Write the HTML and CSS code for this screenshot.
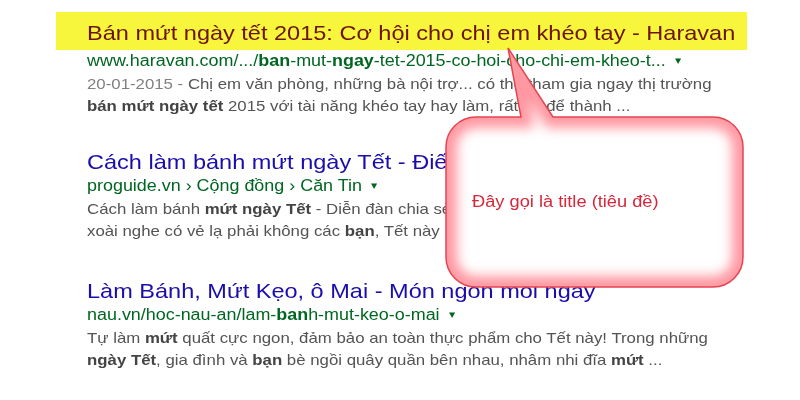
FILE: index.html
```html
<!DOCTYPE html>
<html lang="vi">
<head>
    <meta charset="UTF-8">
    <meta name="viewport" content="width=device-width, initial-scale=1.0">
    <title>Bán mứt ngày tết</title>
    <link rel="stylesheet" href="styles.css">
</head>
<body>
    <div class="results">
        <div class="result">
            <h3 class="title highlight">Bán mứt ngày tết 2015: Cơ hội cho chị em khéo tay - Haravan</h3>
            <div class="url">www.haravan.com/.../<b>ban</b>-mut-<b>ngay</b>-tet-2015-co-hoi-cho-chi-em-kheo-t... <span class="caret">▾</span></div>
            <p class="snippet"><span class="date">20-01-2015 - </span>Chị em văn phòng, những bà nội trợ... có thể tham gia ngay thị trường<br><b>bán mứt ngày tết</b> 2015 với tài năng khéo tay hay làm, rất dễ để thành ...</p>
        </div>
        <div class="result">
            <h3 class="title">Cách làm bánh mứt ngày Tết - Điếm tin</h3>
            <div class="url">proguide.vn › Cộng đồng › Căn Tin <span class="caret">▾</span></div>
            <p class="snippet">Cách làm bánh <b>mứt ngày Tết</b> - Diễn đàn chia sẻ<br>xoài nghe có vẻ lạ phải không các <b>bạn</b>, Tết này</p>
        </div>
        <div class="result">
            <h3 class="title">Làm Bánh, Mứt Kẹo, ô Mai - Món ngon mỗi ngày</h3>
            <div class="url">nau.vn/hoc-nau-an/lam-<b>ban</b>h-mut-keo-o-mai <span class="caret">▾</span></div>
            <p class="snippet">Tự làm <b>mứt</b> quất cực ngon, đảm bảo an toàn thực phẩm cho Tết này! Trong những<br><b>ngày Tết</b>, gia đình và <b>bạn</b> bè ngồi quây quần bên nhau, nhâm nhi đĩa <b>mứt</b> ...</p>
        </div>
    </div>

    <div class="callout">
        <svg class="bubble" width="310" height="254" viewBox="0 0 310 254">
            <defs>
                <clipPath id="bubbleClip">
                    <path id="bubbleShape" d="M36 77 L81 77 L68 8 L113 77 L273 77 A30 30 0 0 1 303 107 L303 217 A30 30 0 0 1 273 247 L36 247 A30 30 0 0 1 6 217 L6 107 A30 30 0 0 1 36 77 Z"/>
                </clipPath>
                <filter id="glow" x="-20%" y="-20%" width="140%" height="140%">
                    <feGaussianBlur stdDeviation="6"/>
                </filter>
            </defs>
            <use href="#bubbleShape" fill="#fff"/>
            <g clip-path="url(#bubbleClip)">
                <use href="#bubbleShape" fill="none" stroke="#ff8590" stroke-opacity="0.85" stroke-width="22" filter="url(#glow)"/>
            </g>
            <use href="#bubbleShape" fill="none" stroke="#e5444f" stroke-width="1.5"/>
        </svg>
        <p class="callout-text">Đây gọi là title (tiêu đề)</p>
    </div>
</body>
</html>
```

FILE: styles.css
```css
body {
    margin: 0;
    padding: 0;
    background: #fff;
    font-family: "Liberation Sans", Arial, sans-serif;
    position: relative;
    width: 800px;
    height: 400px;
    overflow: hidden;
}
/* the screenshot is stretched sideways, so the text is too */
.results {
    padding: 12px 0 0 77.7px;
    width: 640px;
    transform: scaleX(1.12);
    transform-origin: 0 0;
}
.result {
    margin-bottom: 32px;
}
.result:nth-child(2) {
    margin-bottom: 36px;
}
.title {
    margin: 0;
    font-weight: normal;
    font-size: 21px;
    line-height: 26px;
    color: #1a0dab;
    white-space: nowrap;
}
.highlight {
    display: inline-block;
    background: #f7f53c;
    color: #6b1508;
    margin-left: -27.7px;
    padding: 8px 11px 4px 27.7px;
}
.url {
    font-size: 16px;
    line-height: 20px;
    color: #006621;
    white-space: nowrap;
}
.caret {
    font-size: 11px;
    margin-left: 4px;
    vertical-align: 2px;
}
.snippet {
    margin: 2px 0 0;
    font-size: 15px;
    line-height: 22px;
    color: #545454;
    white-space: nowrap;
}
.snippet b {
    color: #444;
}
.date {
    color: #808080;
}
.callout {
    position: absolute;
    left: 440px;
    top: 40px;
    width: 310px;
    height: 254px;
}
.bubble {
    position: absolute;
    left: 0;
    top: 0;
}
.callout-text {
    position: relative;
    display: inline-block;
    margin: 0;
    padding: 152px 0 0 32px;
    font-size: 16px;
    line-height: 20px;
    color: #d6283a;
    transform: scaleX(1.14);
    transform-origin: 32px 0;
}
```
